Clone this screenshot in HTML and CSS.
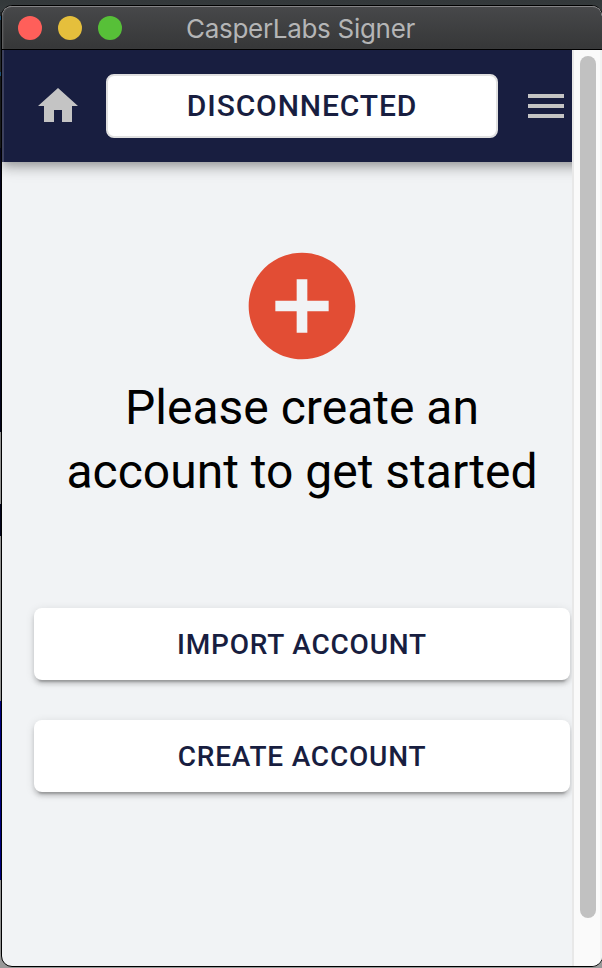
FILE: index.html
```html
<!DOCTYPE html>
<html lang="en">

<head>
    <meta charset="UTF-8">
    <meta name="viewport" content="width=device-width, initial-scale=1.0">
    <title>CasperLabs Signer</title>
    <link rel="stylesheet" href="styles.css">
</head>

<body>
    <div class="desktop">
        <div class="window">
            <div class="titlebar">
                <div class="lights">
                    <span class="light red"></span>
                    <span class="light yellow"></span>
                    <span class="light green"></span>
                </div>
                <span class="window-title">CasperLabs Signer</span>
            </div>

            <div class="view">
                <div class="page">
                    <header class="appbar">
                        <svg class="icon" viewBox="0 0 24 24">
                            <path d="M10 20v-6h4v6h5v-8h3L12 3 2 12h3v8z" />
                        </svg>
                        <button class="status">DISCONNECTED</button>
                        <svg class="icon" viewBox="0 0 24 24">
                            <path d="M3 18h18v-2H3v2zm0-5h18v-2H3v2zm0-7v2h18V6H3z" />
                        </svg>
                    </header>

                    <main class="content">
                        <svg class="add-icon" viewBox="0 0 24 24">
                            <path d="M12 2C6.48 2 2 6.48 2 12s4.48 10 10 10 10-4.48 10-10S17.52 2 12 2zm5 11h-4v4h-2v-4H7v-2h4V7h2v4h4v2z" />
                        </svg>
                        <h1>Please create an<br>account to get started</h1>
                        <div class="actions">
                            <button class="btn">IMPORT ACCOUNT</button>
                            <button class="btn">CREATE ACCOUNT</button>
                        </div>
                    </main>
                </div>

                <div class="scrollbar">
                    <div class="thumb"></div>
                </div>
            </div>
        </div>
    </div>
</body>

</html>
```
FILE: styles.css
```css
* {
    padding: 0;
    margin: 0;
    box-sizing: border-box;
}

body {
    width: 602px;
    height: 968px;
    overflow: hidden;
    font-family: Roboto, sans-serif;
}

/* What shows around the window */
.desktop {
    height: 968px;
    padding: 5px 0 1px 1px;
    background:
        linear-gradient(#33383a, #373c3e) 0 0 / 100% 12px no-repeat,
        linear-gradient(#999, #999) 0 100% / 100% 14px no-repeat,
        linear-gradient(#23282b 0 16px, #1c4f75 16px 20px, #23282b 20px 72px, #1c4f75 72px 76px, #16191b 76px 148px, #04051c 148px 432px, #929292 432px 504px, #04051c 504px 536px, #929292 536px 701px, #00007c 701px 880px, #929292 880px);
}

.window {
    display: flex;
    flex-direction: column;
    width: 602px;
    height: 962px;
    border: 1px solid #000;
    border-radius: 11px;
    overflow: hidden;
    background-color: #f1f3f5;
}

/* Title bar */
.titlebar {
    display: flex;
    align-items: center;
    height: 44px;
    padding-left: 16px;
    background: linear-gradient(#47484a, #363738);
    border-bottom: 1px solid #000;
    border-radius: 10px 10px 0 0;
    box-shadow: inset 0 2px 0 -1px #858587, inset 2px 0 2px -1px #6a6a6c;
}

.lights {
    display: flex;
    gap: 16px;
}

.light {
    width: 24px;
    height: 24px;
    border-radius: 50%;
}

.red {
    background-color: #ff5f5a;
}

.yellow {
    background-color: #e5bf3c;
}

.green {
    background-color: #57c038;
}

.window-title {
    margin-left: 64px;
    padding-top: 2px;
    color: #b4b5b6;
    font-family: Inter, sans-serif;
    font-size: 26px;
    line-height: 32px;
    letter-spacing: -0.3px;
    white-space: nowrap;
}

/* Page and scrollbar */
.view {
    display: flex;
    flex: 1;
}

.page {
    width: 570px;
    overflow: hidden;
}

.scrollbar {
    flex: 1;
    padding: 6px 0 0 6px;
    background-color: #fafafa;
    border-left: 2px solid #e8e8e8;
    border-right: 2px solid #f2f2f2;
}

.thumb {
    width: 16px;
    height: 862px;
    background-color: #c1c1c1;
    border-radius: 8px;
}

/* App bar */
.appbar {
    display: flex;
    align-items: center;
    gap: 24px;
    width: 600px;
    height: 112px;
    padding-left: 32px;
    background-color: #181e40;
    box-shadow: 0 4px 8px -2px rgba(0, 0, 0, 0.2), 0 8px 10px rgba(0, 0, 0, 0.14), 0 2px 20px rgba(0, 0, 0, 0.12), inset 2px 0 0 #3c405c;
}

.icon {
    flex: none;
    width: 48px;
    height: 48px;
    fill: #c4c4c4;
}

.status {
    width: 392px;
    height: 64px;
    padding-bottom: 2px;
    background-color: #fff;
    color: #181e40;
    border: 2px solid #e0e0e0;
    border-radius: 8px;
    font-family: Roboto, sans-serif;
    font-size: 30px;
    font-weight: 500;
    letter-spacing: 0.857px;
}

/* Start screen */
.content {
    display: flex;
    flex-direction: column;
    align-items: center;
    width: 600px;
    padding: 80px 32px 0;
}

.add-icon {
    width: 128px;
    height: 128px;
    fill: #e24d34;
}

.content h1 {
    margin-top: 6px;
    color: #000;
    font-size: 48px;
    font-weight: 400;
    line-height: 64px;
    text-align: center;
    white-space: nowrap;
}

.actions {
    display: flex;
    flex-direction: column;
    gap: 40px;
    width: 536px;
    margin-top: 104px;
}

.btn {
    height: 72px;
    background-color: #fff;
    color: #181e40;
    border: none;
    border-radius: 8px;
    box-shadow: 0 6px 2px -4px rgba(0, 0, 0, 0.2), 0 4px 4px rgba(0, 0, 0, 0.14), 0 2px 10px rgba(0, 0, 0, 0.12);
    font-family: Roboto, sans-serif;
    font-size: 28px;
    font-weight: 500;
    letter-spacing: 0.8px;
}
```
